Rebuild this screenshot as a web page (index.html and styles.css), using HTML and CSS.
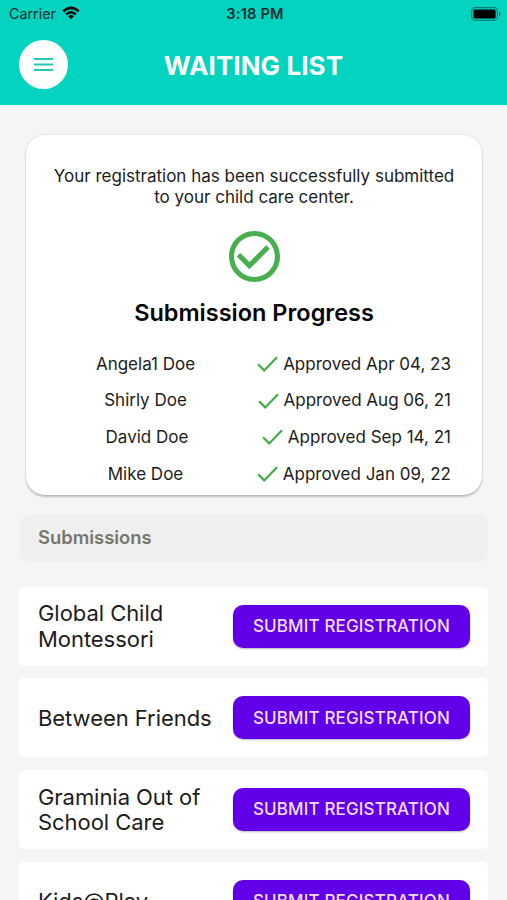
FILE: index.html
```html
<!DOCTYPE html>
<html lang="en">
<head>
<meta charset="utf-8">
<title>Waiting List</title>
<link rel="stylesheet" href="styles.css">
</head>
<body>
<header class="header">
  <div class="status">
    <div class="carrier"><span>Carrier</span>
      <svg class="wifi" viewBox="0 0 18 14"><path d="M0.4 4.5Q9-3.300 17.600 4.500L15.800 6.300Q9 .3 2.200 6.300Z"/><path d="M3.300 7.500Q9 2.400 14.700 7.500L13 9.200Q9 5.700 5 9.200Z"/><path d="M6.100 10.300Q9 7.700 11.900 10.300L9 13.300Z"/></svg>
    </div>
    <span class="time">3:18 PM</span>
    <svg class="battery" viewBox="0 0 30 14"><rect x=".6" y=".6" width="25.800" height="12.800" rx="3.600" fill="none" stroke="#000" stroke-opacity=".4" stroke-width="1.200"/><rect x="2.400" y="2.400" width="22.200" height="9.200" rx="1.500"/><path d="M28 4.700Q29.600 5.300 29.600 7T28 9.300Z" fill-opacity=".4"/></svg>
  </div>
  <div class="bar">
    <button class="menu" aria-label="Menu"><svg viewBox="0 0 19 13"><path d="M.5 1h18M.5 6.500h18M.5 12h18"/></svg></button>
    <h1 class="title">WAITING LIST</h1>
  </div>
</header>
<main class="content">
  <section class="progress">
    <p class="message">Your registration has been successfully submitted<br>to your child care center.</p>
    <svg class="done" viewBox="2 2 20 20"><path d="M16.590 7.580 10 14.170l-3.590-3.580L5 12l5 5 8-8zM12 2C6.480 2 2 6.480 2 12s4.480 10 10 10 10-4.480 10-10S17.520 2 12 2zm0 18c-4.420 0-8-3.580-8-8s3.580-8 8-8 8 3.580 8 8-3.580 8-8 8z"/></svg>
    <h2 class="heading">Submission Progress</h2>
    <ul class="people">
      <li><span class="name">Angela1 Doe</span><span class="state"><svg class="check" viewBox="0 0 21 16"><path d="M1 8.200 7.200 14.400 20 1.200"/></svg><span class="approved">Approved Apr 04, 23</span></span></li>
      <li><span class="name">Shirly Doe</span><span class="state"><svg class="check" viewBox="0 0 21 16"><path d="M1 8.200 7.200 14.400 20 1.200"/></svg><span class="approved">Approved Aug 06, 21</span></span></li>
      <li><span class="name david">David Doe</span><span class="state"><svg class="check" viewBox="0 0 21 16"><path d="M1 8.200 7.200 14.400 20 1.200"/></svg><span class="approved">Approved Sep 14, 21</span></span></li>
      <li><span class="name">Mike Doe</span><span class="state"><svg class="check" viewBox="0 0 21 16"><path d="M1 8.200 7.200 14.400 20 1.200"/></svg><span class="approved">Approved Jan 09, 22</span></span></li>
    </ul>
  </section>
  <h3 class="section"><span>Submissions</span></h3>
  <div class="centers">
    <article class="center"><span class="label">Global Child<br>Montessori</span><button class="submit"><span>SUBMIT REGISTRATION</span></button></article>
    <article class="center"><span class="label">Between Friends</span><button class="submit"><span>SUBMIT REGISTRATION</span></button></article>
    <article class="center"><span class="label">Graminia Out of<br>School Care</span><button class="submit"><span>SUBMIT REGISTRATION</span></button></article>
    <article class="center"><span class="label">Kids@Play</span><button class="submit"><span>SUBMIT REGISTRATION</span></button></article>
  </div>
</main>
</body>
</html>
```
FILE: styles.css
```css
* { box-sizing: border-box; margin: 0; padding: 0; }
html, body { height: 900px; overflow: hidden; }
body { background: #f5f5f5; color: #1c1c1c; font-family: Inter, sans-serif; display: flex; flex-direction: column; }
svg { display: block; flex: none; }
button { border: 0; font: inherit; }
.header { height: 104.5px; flex: none; background: #03d3bf; }
.status { height: 28px; padding: 0 6px 0 9px; display: grid; grid-template-columns: 1fr auto 1fr; align-items: center; font-size: 14.300px; color: #06312d; }
.carrier { display: flex; align-items: center; gap: 6px; }
.carrier span, .time { line-height: 16px; margin-top: -1px; }
.wifi { width: 18px; height: 14px; fill: #000; margin-top: -2px; }
.time { font-size: 14.600px; font-weight: 600; letter-spacing: .2px; }
.battery { width: 30px; height: 14px; justify-self: end; margin-top: -1px; }
.bar { height: 73px; padding: 0 19px; display: grid; grid-template-columns: 49px 1fr 49px; align-items: center; }
.menu { width: 49px; height: 49px; border-radius: 50%; background: #fff; display: grid; place-items: center; }
.menu svg { width: 19px; height: 13px; stroke: #21c9b9; stroke-width: 1.8; stroke-linecap: round; }
.title { color: #fff; font-size: 26px; font-weight: 700; text-align: center; letter-spacing: .08px; line-height: 30px; white-space: nowrap; padding-top: 2px; }
.content { padding: 30.500px 19px 0; }
.progress { width: 456px; height: 360px; margin-left: 7px; padding-top: 30.500px; background: #fff; border-radius: 19px; box-shadow: 0 2px 2px rgba(0,0,0,.2), 0 0 2px rgba(0,0,0,.16); display: flex; flex-direction: column; align-items: center; }
.message { font-size: 17px; line-height: 21px; text-align: center; white-space: nowrap; }
.done { width: 51px; height: 51px; margin-top: 23px; fill: #49ae4d; }
.heading { margin-top: 15.500px; color: #050505; font-size: 23.500px; line-height: 32px; font-weight: 600; white-space: nowrap; }
.people { width: 100%; margin-top: 16.500px; list-style: none; }
.people li { height: 36.600px; padding: 0 31px 0 10px; display: grid; grid-template-columns: 219px 1fr; align-items: center; font-size: 17px; white-space: nowrap; }
.name { text-align: center; }
.david { padding-left: 3px; }
.state { display: flex; align-items: center; justify-content: flex-end; gap: 5px; }
.check { width: 21px; height: 16px; margin-top: 1px; fill: none; stroke: #43ac4a; stroke-width: 2.200; }
.section { height: 48px; margin: 19px 0 24.500px 1px; padding: 0 18px 2px; display: flex; align-items: center; border-radius: 10px; background: #efefef; color: #77776c; font-size: 18.400px; font-weight: 600; }
.centers { display: grid; gap: 12.700px; }
.center { height: 79px; padding: 0 18px 0 19px; background: #fff; border-radius: 5px; display: flex; align-items: center; justify-content: space-between; }
.label { padding-top: 2px; font-size: 22px; line-height: 25.700px; letter-spacing: -.05px; white-space: nowrap; }
.submit { width: 237px; height: 43px; border-radius: 10px; background: #6100e8; color: #f3dcff; font-size: 17px; font-weight: 500; letter-spacing: .14px; box-shadow: 0 1px 2px rgba(0,0,0,.28); white-space: nowrap; }
```
